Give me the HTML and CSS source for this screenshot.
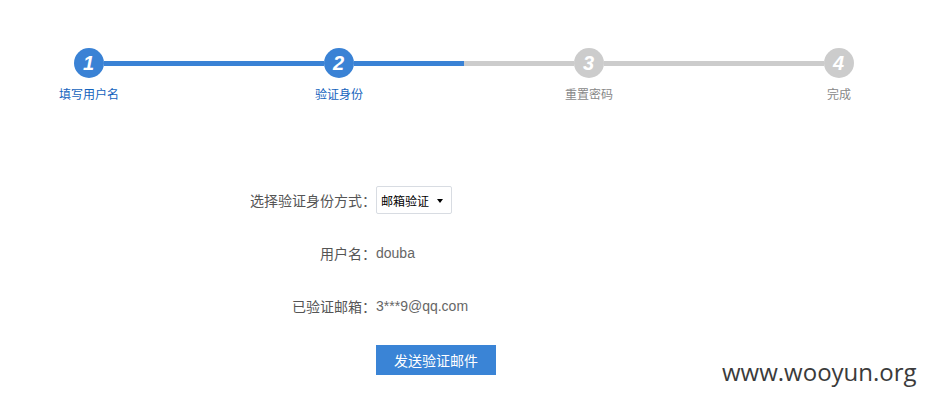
FILE: index.html
```html
<!DOCTYPE html>
<html lang="zh-CN">
<head>
<meta charset="utf-8">
<title>找回密码</title>
<link rel="stylesheet" href="styles.css">
</head>
<body>
<div class="page">
  <div class="steps">
    <div class="step done">
      <span class="num">1</span>
      <span class="label">填写用户名</span>
    </div>
    <div class="line done"></div>
    <div class="step done">
      <span class="num">2</span>
      <span class="label">验证身份</span>
    </div>
    <div class="line half"><span class="fill"></span></div>
    <div class="step">
      <span class="num">3</span>
      <span class="label">重置密码</span>
    </div>
    <div class="line"></div>
    <div class="step">
      <span class="num">4</span>
      <span class="label">完成</span>
    </div>
  </div>

  <form class="form">
    <label class="key">选择验证身份方式：</label>
    <div class="val">
      <span class="select-wrap">
        <select class="select"><option>邮箱验证</option></select>
      </span>
    </div>
    <span class="key">用户名：</span>
    <span class="val text">douba</span>
    <span class="key">已验证邮箱：</span>
    <span class="val text">3***9@qq.com</span>
    <span class="key"></span>
    <div class="val"><button type="button" class="btn">发送验证邮件</button></div>
  </form>
</div>
<div class="watermark">www.wooyun.org</div>
</body>
</html>
```
FILE: styles.css
```css
html, body {
  margin: 0;
  padding: 0;
  background: #fff;
}
body {
  font-family: "Liberation Sans", "Noto Sans CJK SC", sans-serif;
  width: 928px;
  height: 402px;
  position: relative;
  overflow: hidden;
}
.page {
  padding-top: 48px;
}
.steps {
  display: flex;
  align-items: flex-start;
  margin-left: 74px;
  width: 780px;
}
.step {
  width: 30px;
  flex: none;
  display: flex;
  flex-direction: column;
  align-items: center;
}
.num {
  width: 30px;
  height: 30px;
  border-radius: 50%;
  background: #cccccc;
  color: #fff;
  font: italic bold 20px/30px "Liberation Sans", sans-serif;
  text-align: center;
  text-indent: -1px;
}
.step.done .num {
  background: #3a82d5;
}
.label {
  margin-top: 8px;
  white-space: nowrap;
  font-size: 12px;
  line-height: 16px;
  color: #888;
  font-family: "Noto Sans CJK SC", sans-serif;
}
.step.done .label {
  color: #1463bd;
}
.line {
  flex: 1;
  height: 5px;
  margin-top: 13px;
  background: #cccccc;
  position: relative;
}
.line.done {
  background: #3a82d5;
}
.line .fill {
  display: block;
  width: 110px;
  height: 5px;
  background: #3a82d5;
}
.form {
  margin-top: 84px;
  display: grid;
  grid-template-columns: 376px auto;
  row-gap: 25px;
  align-items: center;
}
.key {
  text-align: right;
  font-size: 14px;
  color: #555;
  font-family: "Noto Sans CJK SC", sans-serif;
  line-height: 28px;
  height: 28px;
}
.val {
  font-size: 14px;
  color: #666;
}
.text {
  line-height: 28px;
  height: 28px;
}
.select-wrap {
  position: relative;
  display: inline-block;
}
.select-wrap::after {
  content: "";
  position: absolute;
  right: 9px;
  top: 13px;
  border-left: 3.5px solid transparent;
  border-right: 3.5px solid transparent;
  border-top: 4px solid #000;
  pointer-events: none;
}
.select {
  appearance: none;
  -webkit-appearance: none;
  width: 76px;
  height: 28px;
  border: 1px solid #d8dce2;
  border-radius: 2px;
  background: #fff;
  padding: 0 0 0 4px;
  font-family: "Noto Sans CJK SC", sans-serif;
  font-size: 12px;
  color: #000;
  display: block;
}
.btn {
  width: 120px;
  height: 30px;
  border: 0;
  border-radius: 0;
  background: #3a84d6;
  color: #fff;
  font-family: "Noto Sans CJK SC", sans-serif;
  font-size: 14px;
  padding: 0;
  display: block;
}
.watermark {
  position: absolute;
  left: 722px;
  top: 355px;
  font-family: "Open Sans", sans-serif;
  font-size: 24px;
  color: #3b3b3b;
}
```
